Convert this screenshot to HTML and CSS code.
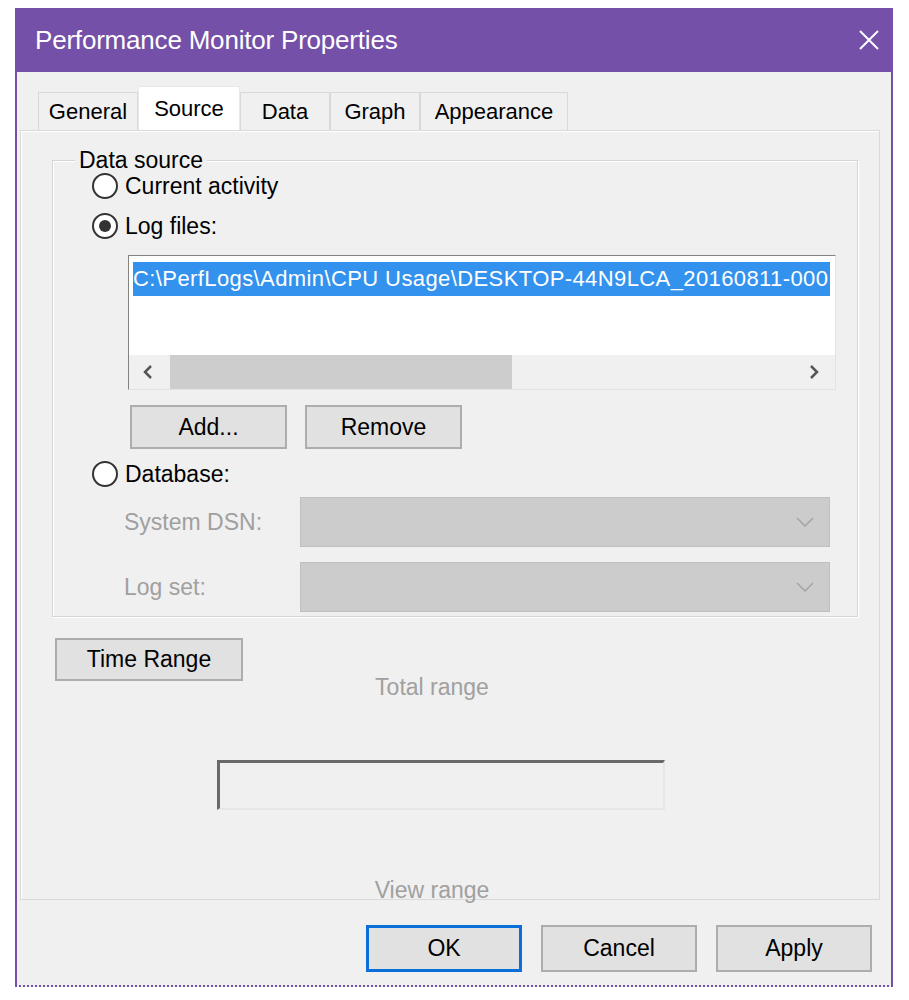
FILE: index.html
```html
<!DOCTYPE html>
<html lang="en">
<head>
    <meta charset="UTF-8">
    <title>Performance Monitor Properties</title>
    <link rel="stylesheet" href="styles.css">
</head>
<body>
    <div class="dialog">
        <div class="titlebar">
            <span class="title">Performance Monitor Properties</span>
            <svg class="close" width="24" height="24" viewBox="0 0 24 24">
                <path d="M3 3 L21 21 M21 3 L3 21" stroke="#fff" stroke-width="2" fill="none"/>
            </svg>
        </div>

        <div class="tabs">
            <div class="tab tab-general">General</div>
            <div class="tab tab-source active">Source</div>
            <div class="tab tab-data">Data</div>
            <div class="tab tab-graph">Graph</div>
            <div class="tab tab-appearance">Appearance</div>
        </div>

        <div class="panel">
            <div class="group">
                <span class="group-label">Data source</span>

                <div class="radio-row">
                    <span class="radio"></span>
                    <span>Current activity</span>
                </div>
                <div class="radio-row">
                    <span class="radio checked"></span>
                    <span>Log files:</span>
                </div>

                <div class="listbox">
                    <div class="list-items">
                        <span class="list-item">C:\PerfLogs\Admin\CPU Usage\DESKTOP-44N9LCA_20160811-000</span>
                    </div>
                    <div class="hscroll">
                        <svg class="arrow" width="14" height="18" viewBox="0 0 14 18">
                            <path d="M10 3 L4 9 L10 15" stroke="#555" stroke-width="2.5" fill="none"/>
                        </svg>
                        <div class="track"><div class="thumb"></div></div>
                        <svg class="arrow" width="14" height="18" viewBox="0 0 14 18">
                            <path d="M4 3 L10 9 L4 15" stroke="#555" stroke-width="2.5" fill="none"/>
                        </svg>
                    </div>
                </div>

                <div class="list-buttons">
                    <button class="btn">Add...</button>
                    <button class="btn">Remove</button>
                </div>

                <div class="radio-row db-row">
                    <span class="radio"></span>
                    <span>Database:</span>
                </div>

                <div class="field-row">
                    <span class="field-label">System DSN:</span>
                    <div class="combo">
                        <svg width="20" height="12" viewBox="0 0 20 12">
                            <path d="M2 2 L10 10 L18 2" stroke="#a3a3a3" stroke-width="1.5" fill="none"/>
                        </svg>
                    </div>
                </div>
                <div class="field-row">
                    <span class="field-label">Log set:</span>
                    <div class="combo">
                        <svg width="20" height="12" viewBox="0 0 20 12">
                            <path d="M2 2 L10 10 L18 2" stroke="#a3a3a3" stroke-width="1.5" fill="none"/>
                        </svg>
                    </div>
                </div>
            </div>

            <button class="btn time-range">Time Range</button>

            <div class="range">
                <div class="range-label total">Total range</div>
                <div class="range-box"></div>
                <div class="range-label view">View range</div>
            </div>
        </div>

        <div class="footer">
            <button class="btn default">OK</button>
            <button class="btn">Cancel</button>
            <button class="btn">Apply</button>
        </div>
    </div>
</body>
</html>
```

FILE: styles.css
```css
body {
    margin: 0;
    background: #fff;
    font-family: "Liberation Sans", Arial, sans-serif;
    font-size: 23px;
    color: #000;
}

.dialog {
    margin: 8px 0 0 15px;
    width: 874px;
    background: #f0f0f0;
    border-left: 2px solid #7450a8;
    border-right: 2px solid #7450a8;
    border-bottom: 2px dotted #7450a8;
    padding-bottom: 13px;
}

.titlebar {
    height: 64px;
    background: #7450a8;
    color: #fff;
    display: flex;
    align-items: center;
    justify-content: space-between;
    padding: 0 10px 0 18px;
    font-size: 26px;
}

.title {
    letter-spacing: -0.2px;
}

/* tabs */
.tabs {
    display: flex;
    align-items: flex-end;
    margin: 14px 0 0 21px;
    height: 44px;
    font-size: 22px;
}

.tab {
    height: 38px;
    box-sizing: border-box;
    border: 1px solid #d9d9d9;
    border-bottom: none;
    background: #f0f0f0;
    display: flex;
    align-items: center;
    justify-content: center;
}

.tab.active {
    height: 44px;
    background: #fff;
    border-color: #e8e8e8;
}

.tab-general { width: 100px; }
.tab-source { width: 102px; }
.tab-data { width: 90px; }
.tab-graph { width: 90px; }
.tab-appearance { width: 148px; }

/* panel */
.panel {
    margin: 0 11px 0 3px;
    height: 770px;
    box-sizing: border-box;
    border: 1px solid #d9d9d9;
    box-shadow: inset 1px 1px 0 #fff;
    padding: 29px 21px 0 31px;
}

.group {
    position: relative;
    border: 1px solid #d5d5d5;
    box-shadow: inset 1px 1px 0 #fff, 1px 1px 0 #fff;
    padding: 5px 0 4px 39px;
}

.group-label {
    position: absolute;
    left: 22px;
    top: -13px;
    padding: 0 4px;
    background: #f0f0f0;
    line-height: 24px;
}

.radio-row {
    height: 40px;
    display: flex;
    align-items: center;
    gap: 7px;
}

.radio {
    width: 22px;
    height: 22px;
    border: 2px solid #333;
    border-radius: 50%;
    background: #fff;
    display: flex;
    align-items: center;
    justify-content: center;
}

.radio.checked::after {
    content: "";
    width: 12px;
    height: 12px;
    border-radius: 50%;
    background: #333;
}

/* log file list */
.listbox {
    margin: 9px 0 0 36px;
    width: 708px;
    height: 135px;
    box-sizing: border-box;
    border: 1px solid #828282;
    border-right-color: #e3e3e3;
    border-bottom-color: #e3e3e3;
    background: #fff;
    display: flex;
    flex-direction: column;
}

.list-items {
    flex: 1;
    padding: 6px 4px 0 4px;
    font-size: 22px;
}

.list-item {
    display: inline-block;
    background: #3392ee;
    color: #fff;
    line-height: 34px;
    padding-right: 2px;
    letter-spacing: 0.4px;
    white-space: nowrap;
}

.hscroll {
    height: 34px;
    background: #f0f0f0;
    display: flex;
    align-items: center;
    padding: 0 14px 0 12px;
    gap: 6px;
}

.track {
    flex: 1;
    height: 34px;
}

.thumb {
    width: 342px;
    height: 100%;
    margin-left: 9px;
    background: #cdcdcd;
}

.list-buttons {
    display: flex;
    gap: 18px;
    margin: 15px 0 0 38px;
}

.btn {
    font-family: "Liberation Sans", Arial, sans-serif;
    font-size: 23px;
    color: #000;
    background: #e1e1e1;
    border: 2px solid #adadad;
    height: 44px;
    width: 157px;
    padding: 0;
}

.db-row {
    margin-top: 5px;
}

.field-row {
    display: flex;
    align-items: center;
    margin: 3px 0 15px 32px;
}

.field-row:last-child {
    margin-bottom: 0;
}

.field-label {
    width: 176px;
    color: #a0a0a0;
}

.combo {
    width: 530px;
    height: 50px;
    box-sizing: border-box;
    background: #cccccc;
    border: 1px solid #bfbfbf;
    display: flex;
    align-items: center;
    justify-content: flex-end;
    padding-right: 14px;
}

.time-range {
    margin: 21px 0 0 3px;
    width: 188px;
    height: 43px;
}

/* range area */
.range {
    margin-left: 165px;
    width: 448px;
    display: flex;
    flex-direction: column;
}

.range-label {
    color: #a0a0a0;
    text-align: center;
    padding-right: 18px;
    line-height: 24px;
}

.range-label.total {
    margin-top: -6px;
}

.range-box {
    margin-top: 61px;
    height: 50px;
    box-sizing: border-box;
    border-top: 3px solid #696969;
    border-left: 3px solid #696969;
    border-right: 2px solid #e6e6e6;
    border-bottom: 2px solid #e6e6e6;
}

.range-label.view {
    margin-top: 68px;
}

/* bottom buttons */
.footer {
    display: flex;
    justify-content: flex-end;
    gap: 19px;
    padding: 25px 19px 0 0;
}

.footer .btn {
    width: 156px;
    height: 47px;
}

.footer .btn.default {
    border: 3px solid #0a6fd8;
}
```
